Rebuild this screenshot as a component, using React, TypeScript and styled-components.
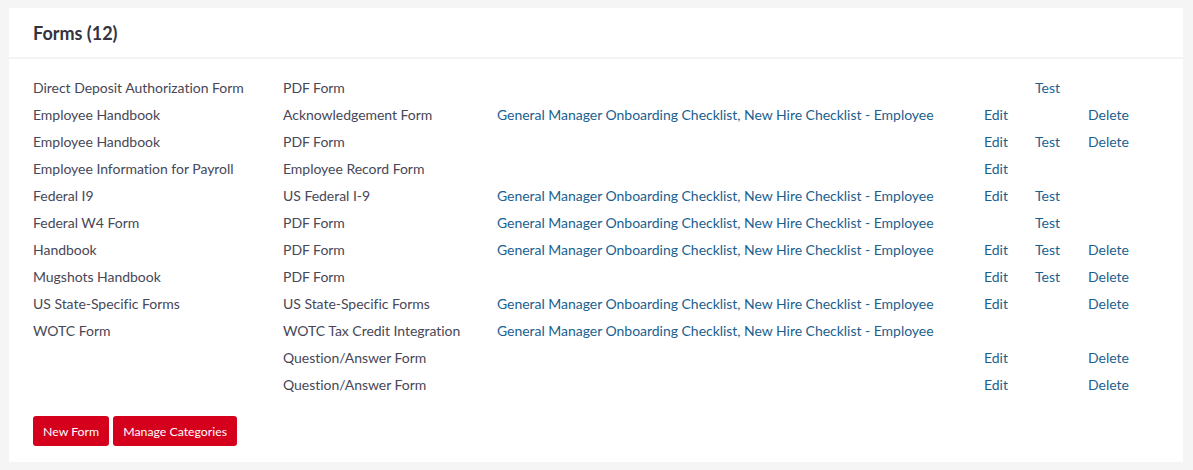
import React from "react";
import styled, { createGlobalStyle } from "styled-components";

const Global = createGlobalStyle`
  html, body { margin: 0; padding: 0; background: #f5f5f5; }
  body { font-family: Lato, "Open Sans", sans-serif; }
`;

const Page = styled.div`
  padding: 8px 10px 8px 9px;
`;

const Card = styled.section`
  background: #fff;
  display: flex;
  flex-direction: column;
`;

const Header = styled.header`
  height: 49px;
  display: flex;
  align-items: center;
  padding: 0 24px;
  border-bottom: 2px solid #f3f3f3;
`;

const Title = styled.h2`
  margin: 0;
  font-size: 18px;
  font-weight: 700;
  color: #333340;
`;

const Body = styled.div`
  padding: 15px 24px 16px 24px;
  display: flex;
  flex-direction: column;
`;

const Table = styled.div`
  display: flex;
  flex-direction: column;
`;

const Row = styled.div`
  display: grid;
  grid-template-columns: 250px 214px 487px 51px 53px 1fr;
  height: 27px;
  align-items: center;
  font-size: 14px;
  line-height: 17px;
  letter-spacing: -0.03px;
`;

const Cell = styled.div`
  color: #474757;
  white-space: nowrap;
`;

const Link = styled.a`
  color: #1b5f8f;
  text-decoration: none;
  white-space: nowrap;
  cursor: pointer;
`;

const Actions = styled.div`
  display: flex;
  gap: 4px;
  margin-top: 18px;
`;

const Button = styled.button`
  background: #d5001c;
  color: #fff;
  border: none;
  border-radius: 3px;
  height: 30px;
  padding: 0 10px;
  font-family: Lato, sans-serif;
  font-size: 12.3px;
  cursor: pointer;
`;

type FormRow = {
  name: string;
  type: string;
  checklist?: boolean;
  edit?: boolean;
  test?: boolean;
  del?: boolean;
};

const rows: FormRow[] = [
  { name: "Direct Deposit Authorization Form", type: "PDF Form", test: true },
  { name: "Employee Handbook", type: "Acknowledgement Form", checklist: true, edit: true, del: true },
  { name: "Employee Handbook", type: "PDF Form", edit: true, test: true, del: true },
  { name: "Employee Information for Payroll", type: "Employee Record Form", edit: true },
  { name: "Federal I9", type: "US Federal I-9", checklist: true, edit: true, test: true },
  { name: "Federal W4 Form", type: "PDF Form", checklist: true, test: true },
  { name: "Handbook", type: "PDF Form", checklist: true, edit: true, test: true, del: true },
  { name: "Mugshots Handbook", type: "PDF Form", edit: true, test: true, del: true },
  { name: "US State-Specific Forms", type: "US State-Specific Forms", checklist: true, edit: true, del: true },
  { name: "WOTC Form", type: "WOTC Tax Credit Integration", checklist: true },
  { name: "", type: "Question/Answer Form", edit: true, del: true },
  { name: "", type: "Question/Answer Form", edit: true, del: true },
];

export default function App() {
  return (
    <>
      <Global />
      <Page>
        <Card>
          <Header>
            <Title>Forms (12)</Title>
          </Header>
          <Body>
            <Table>
              {rows.map((r, i) => (
                <Row key={i}>
                  <Cell>{r.name}</Cell>
                  <Cell>{r.type}</Cell>
                  <div>
                    {r.checklist && (
                      <Link>General Manager Onboarding Checklist, New Hire Checklist - Employee</Link>
                    )}
                  </div>
                  <div>{r.edit && <Link>Edit</Link>}</div>
                  <div>{r.test && <Link>Test</Link>}</div>
                  <div>{r.del && <Link>Delete</Link>}</div>
                </Row>
              ))}
            </Table>
            <Actions>
              <Button>New Form</Button>
              <Button>Manage Categories</Button>
            </Actions>
          </Body>
        </Card>
      </Page>
    </>
  );
}
